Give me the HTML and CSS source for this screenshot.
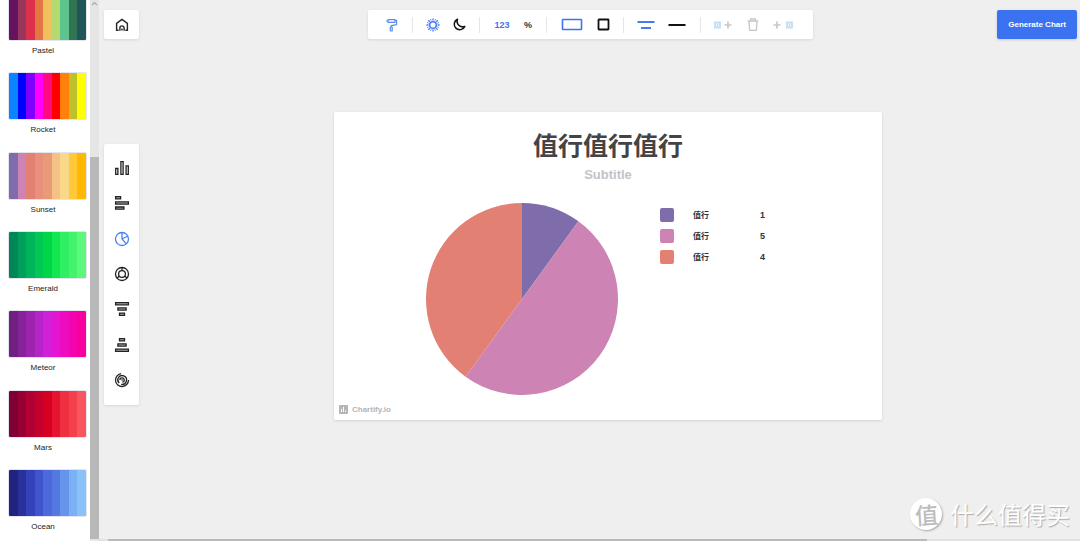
FILE: index.html
```html
<!DOCTYPE html>
<html lang="zh-CN">
<head>
<meta charset="utf-8">
<meta name="viewport" content="width=device-width, initial-scale=1">
<title>Chartify.io</title>
<link rel="stylesheet" href="styles.css">
</head>
<body>
<div class="app">
  <aside class="sidebar">
    <div class="palettes">
      <button class="palette"><span class="swatch pastel"></span><span class="palette-name">Pastel</span></button>
      <button class="palette"><span class="swatch rocket"></span><span class="palette-name">Rocket</span></button>
      <button class="palette"><span class="swatch sunset"></span><span class="palette-name">Sunset</span></button>
      <button class="palette"><span class="swatch emerald"></span><span class="palette-name">Emerald</span></button>
      <button class="palette"><span class="swatch meteor"></span><span class="palette-name">Meteor</span></button>
      <button class="palette"><span class="swatch mars"></span><span class="palette-name">Mars</span></button>
      <button class="palette"><span class="swatch ocean"></span><span class="palette-name">Ocean</span></button>
    </div>
    <div class="vbar">
      <svg width="9" height="8" viewBox="0 0 9 8"><path d="M2 5l2.500-2.500L7 5" fill="none" stroke="#aaa" stroke-width="1.200"/></svg>
      <div class="vbar-thumb"></div>
    </div>
  </aside>

  <main class="main">
    <header class="header">
      <button class="panel home" aria-label="Home">
        <svg width="14" height="14" viewBox="0 0 14 14" fill="none" stroke="#222" stroke-width="1.400"><path d="M3.600 12.300H1.600V5.400L7 1.400l5.400 4v6.900h-2"/><path d="M4.900 12.800V10a2.100 2.100 0 0 1 4.200 0v2.800M7 10.500v2"/></svg>
      </button>
      <div class="panel toolbar" role="toolbar" aria-label="Chart options">
        <div class="group">
          <button class="tool w28" aria-label="Paint"><svg width="14" height="14" viewBox="0 0 14 14" fill="none" stroke="#5b8af2" stroke-width="1.200" stroke-linejoin="round"><path d="M4 1.600h7v2.800H4zM4 3H2M11 2.400h1.600v4.200L7.200 7.600V9"/><path d="M6.300 9h1.900v4H6.300z"/></svg></button>
        </div>
        <div class="group">
          <button class="tool w26" aria-label="Light"><svg width="14" height="14" viewBox="0 0 14 14" fill="none" stroke="#4379f2"><circle cx="7" cy="7" r="3.300" stroke-width="1.500"/><path stroke-width="1.300" d="M7 .4v2M7 11.600v2M.4 7h2M11.600 7h2M2.300 2.300l1.500 1.500M10.200 10.200l1.500 1.500M2.300 11.700l1.500-1.500M10.200 3.800l1.500-1.500"/><path stroke-width=".8" d="M4.500 1l.7 1.700M8.800 11.300l.7 1.700M1 9.500l1.700-.7M11.300 5.200l1.700-.7M1 4.500l1.700.7M11.300 8.800l1.700.7M9.500 1l-.7 1.700M5.200 11.300L4.500 13"/></svg></button>
          <button class="tool w26" aria-label="Dark"><svg width="14" height="13" viewBox="0 0 14 13" fill="none" stroke="#111" stroke-width="1.500" stroke-linejoin="round"><path d="M5.500 1.200a5.500 5.500 0 1 0 7.300 7.200A5.600 5.600 0 0 1 5.500 1.200z"/></svg></button>
        </div>
        <div class="group">
          <button class="tool w30 active">123</button>
          <button class="tool w22">%</button>
        </div>
        <div class="group">
          <button class="tool w36" aria-label="Wide"><svg width="22" height="13" viewBox="0 0 22 13"><rect x="1.500" y="1.500" width="19" height="10" rx=".5" fill="none" stroke="#3f74f1" stroke-width="1.600"/></svg></button>
          <button class="tool w26" aria-label="Square"><svg width="13" height="13" viewBox="0 0 13 13"><rect x="1.500" y="1.500" width="10" height="10" rx=".5" fill="none" stroke="#111" stroke-width="1.800"/></svg></button>
        </div>
        <div class="group">
          <button class="tool w30" aria-label="Title and subtitle"><svg width="18" height="10" viewBox="0 0 18 10" stroke="#4379f2" stroke-width="2"><path d="M.5 2h17M4 8h10"/></svg></button>
          <button class="tool w32" aria-label="Title only"><svg width="18" height="4" viewBox="0 0 18 4" stroke="#111" stroke-width="2"><path d="M.5 2h17"/></svg></button>
        </div>
        <div class="group">
          <button class="tool w30" aria-label="Add before"><svg width="18" height="8" viewBox="0 0 18 8" fill="none"><path d="M1 1.500h5v5H1z" fill="#eef6fd" stroke="#c5ddf3" stroke-width="1.800"/><path d="M3 3.500h1v1H3z" fill="#8fb9e6"/><path d="M10.500 4h7M14 .5v7" stroke="#c8c8c8" stroke-width="1.700"/></svg></button>
          <button class="tool w30" aria-label="Delete"><svg width="12" height="13" viewBox="0 0 12 13" fill="none" stroke="#c6c6c6" stroke-width="1.300"><path d="M.8 3h10.400M3.700 3V1h4.600v2M1.900 3l.8 9.300h6.600l.8-9.300"/></svg></button>
          <button class="tool w30" aria-label="Add after"><svg width="20" height="8" viewBox="0 0 20 8" fill="none"><path d="M.5 4h7M4 .5v7" stroke="#c8c8c8" stroke-width="1.700"/><path d="M14 1.500h5v5h-5z" fill="#eef6fd" stroke="#c5ddf3" stroke-width="1.800"/><path d="M16 3.500h1v1h-1z" fill="#8fb9e6"/></svg></button>
        </div>
      </div>
      <button class="generate">Generate Chart</button>
    </header>

    <div class="workspace">
      <nav class="panel rail" aria-label="Chart types">
        <button class="type" aria-label="Column"><svg width="16" height="16" viewBox="0 0 16 16"><path d="M1.700 8.500h2.200v5.800H1.700zM6.900 1.700h2.200v12.600H6.900zM12.100 5.800h2.200v8.500h-2.200z"/></svg></button>
        <button class="type" aria-label="Bar"><svg width="16" height="16" viewBox="0 0 16 16"><path fill="#aaa" d="M1.600 1.600h5v2.200h-5zM1.600 6.900h12.800v2.200H1.600zM1.600 12h8.300v2.200H1.600z"/></svg></button>
        <button class="type active" aria-label="Pie"><svg width="16" height="16" viewBox="0 0 16 16"><circle cx="8" cy="8" r="6.500"/><path d="M8 1.500V8l4.300 4.900M8 8l6-3"/></svg></button>
        <button class="type" aria-label="Doughnut"><svg width="16" height="16" viewBox="0 0 16 16"><circle cx="8" cy="8" r="6.500"/><circle cx="8" cy="8" r="3.400"/><path d="M8 1.500v3.100M5.400 10.300l-2.600 1.800M10.600 10.300l2.600 1.800"/></svg></button>
        <button class="type" aria-label="Funnel"><svg width="16" height="16" viewBox="0 0 16 16"><path fill="#aaa" d="M1.600 1.600h12.800v2.200H1.600zM3.900 6.900h8.200v2.200H3.900zM5.500 12.100h5v2.200h-5z"/></svg></button>
        <button class="type" aria-label="Pyramid"><svg width="16" height="16" viewBox="0 0 16 16"><path fill="#aaa" d="M5.500 1.600h5v2.200h-5zM3.900 6.900h8.200v2.200H3.900zM1.600 12.100h12.800v2.200H1.600z"/></svg></button>
        <button class="type" aria-label="Radial"><svg width="16" height="16" viewBox="0 0 16 16"><path d="M14.500 8A6.500 6.500 0 1 1 7 1.600M4.200 6a4.400 4.400 0 1 1 3 6.300M5.800 8a2.200 2.200 0 1 1 2.500 2.200M4.200 6c-.8 1.600-.3 3.800 1 5M7.500 8h1.200"/></svg></button>
      </nav>

      <div class="stage">
        <article class="card">
          <h1 class="title">值行值行值行</h1>
          <p class="subtitle">Subtitle</p>
          <div class="chart">
            <svg class="pie" viewBox="-96 -96 192 192" role="img" aria-label="Pie chart: 1, 5, 4">
              <path fill="#7e6cab" d="M0 0V-96A96 96 0 0 1 56.430 -77.670z"/>
              <path fill="#cd84b5" d="M0 0L56.430 -77.670A96 96 0 0 1 -56.430 77.670z"/>
              <path fill="#e28173" d="M0 0L-56.430 77.670A96 96 0 0 1 0 -96z"/>
            </svg>
            <table class="legend">
              <tbody>
                <tr><td class="key"><span class="dot violet"></span></td><td class="name">值行</td><td class="value">1</td></tr>
                <tr><td class="key"><span class="dot pink"></span></td><td class="name">值行</td><td class="value">5</td></tr>
                <tr><td class="key"><span class="dot coral"></span></td><td class="name">值行</td><td class="value">4</td></tr>
              </tbody>
            </table>
          </div>
          <footer class="brand">
            <svg width="9" height="9" viewBox="0 0 9 9"><rect width="9" height="9" rx="1" fill="#b5b5b5"/><path d="M2.500 4v3M4.500 2v5M6.500 5.500V7" stroke="#fff"/></svg>
            <span>Chartify.io</span>
          </footer>
        </article>
      </div>
    </div>
    <div class="hbar"><div class="hbar-thumb"></div></div>
  </main>

  <div class="watermark"><span class="seal"><span class="seal-char">值</span></span><span>什么值得买</span></div>
</div>
</body>
</html>
```
FILE: styles.css
```css
* { box-sizing: border-box; }

body {
  margin: 0;
  background: #efefef;
  color: #333;
  font-family: "Liberation Sans", Arial, "Noto Sans CJK SC", sans-serif;
}

button {
  margin: 0;
  padding: 0;
  border: 0;
  background: none;
  font-family: inherit;
  cursor: pointer;
}

svg { display: block; }

.app {
  position: relative;
  display: flex;
  height: 100vh;
  overflow: hidden;
}

/* Palette list */
.sidebar {
  display: flex;
  flex: none;
  background: #fff;
}

.palettes {
  display: flex;
  flex-direction: column;
  justify-content: space-between;
  width: 90px;
  height: calc(100vh + 3px);
  margin-top: -7px;
  padding-left: 8px;
}

.palette {
  display: flex;
  flex-direction: column;
  width: 79px;
}

.swatch {
  width: 100%;
  height: 48px;
  border: 1px solid #e4e4ee;
  border-radius: 2px;
  background: linear-gradient(90deg,
    var(--a) 0 11.11%, var(--b) 0 22.22%, var(--c) 0 33.33%,
    var(--d) 0 44.44%, var(--e) 0 55.55%, var(--f) 0 66.66%,
    var(--g) 0 77.77%, var(--h) 0 88.88%, var(--i) 0);
}

.pastel { --a: #66135f; --b: #96375b; --c: #dc304c; --d: #e27642; --e: #f2bf5e; --f: #b4d96e; --g: #5cc48c; --h: #317553; --i: #22555a; }
.rocket { --a: #0a84ff; --b: #0000ff; --c: #8000ff; --d: #ff00ff; --e: #ff0a80; --f: #ff0000; --g: #ff800a; --h: #c0c02a; --i: #ffff00; }
.sunset { --a: #7e6cab; --b: #cd84b5; --c: #e28173; --d: #e8907c; --e: #e99a76; --f: #f5c285; --g: #f9d989; --h: #ffc93a; --i: #ffb900; }
.emerald { --a: #008757; --b: #009f5c; --c: #00b45c; --d: #00c853; --e: #00d748; --f: #12e650; --g: #30ef62; --h: #43f36c; --i: #5cf77c; }
.meteor { --a: #702080; --b: #86229a; --c: #9e24b0; --d: #b424c8; --e: #d020d8; --f: #e416d4; --g: #ee0cc0; --h: #f404ae; --i: #f8009c; }
.mars { --a: #800034; --b: #980034; --c: #b20032; --d: #c6002c; --e: #d80020; --f: #e61430; --g: #ee3040; --h: #f4404c; --i: #f8565e; }
.ocean { --a: #20247e; --b: #28309a; --c: #3442ba; --d: #4054cc; --e: #4c6adc; --f: #5478e2; --g: #6694ea; --h: #7ab0f4; --i: #8ac2f8; }

.palette-name {
  padding-right: 9px;
  color: #222;
  font-size: 8px;
  line-height: 20px;
  text-align: center;
}

.vbar {
  display: flex;
  flex-direction: column;
  width: 9px;
  height: 100vh;
  padding-bottom: 2px;
  background: #e5e5e5;
}

.vbar-thumb {
  flex: 1;
  margin-top: 149px;
  background: #b8b8b8;
}

/* Main area */
.main {
  display: flex;
  flex: 1;
  flex-direction: column;
  min-width: 0;
}

.panel {
  background: #fff;
  border-radius: 2px;
  box-shadow: 0 1px 3px rgba(0, 0, 0, 0.1);
}

.header {
  display: grid;
  grid-template-columns: 1fr auto 1fr;
  padding: 10px 3px 0 5px;
}

.home {
  display: grid;
  place-items: center;
  width: 35px;
  height: 29px;
}

.toolbar {
  display: flex;
  align-items: center;
  padding: 0 8px 0 2px;
}

.group {
  display: flex;
  padding: 0 7px;
}

.group + .group { border-left: 1px solid #e6e6e6; }

.tool {
  display: grid;
  place-items: center;
  height: 16px;
  color: #333;
  font-size: 9px;
  font-weight: bold;
}

.tool.active { color: #3f74f1; }

.w22 { width: 22px; }
.w26 { width: 26px; }
.w28 { width: 28px; }
.w30 { width: 30px; }
.w32 { width: 32px; }
.w36 { width: 36px; }

.generate {
  justify-self: end;
  height: 29px;
  padding: 0 11px;
  border-radius: 2px;
  background: #3b72f2;
  box-shadow: 0 1px 3px rgba(0, 0, 0, 0.15);
  color: #fff;
  font-size: 8px;
  font-weight: bold;
}

.workspace {
  display: flex;
  flex: 1;
  align-items: center;
  padding: 0 3px 30px 5px;
}

.rail {
  display: flex;
  flex-direction: column;
  width: 35px;
  min-height: 261px;
  padding: 7px 0;
}

.type {
  display: grid;
  flex: 1;
  place-items: center;
  fill: none;
  stroke: #222;
  stroke-width: 1.3;
}

.type.active { stroke: #4b80f5; }

.stage {
  display: flex;
  flex: 1;
  justify-content: center;
  margin-bottom: 17px;
}

/* Chart card */
.card {
  width: 100%;
  max-width: 548px;
  padding: 19px 5px 5px;
  background: #fff;
  border-radius: 2px;
  box-shadow: 0 1px 3px rgba(0, 0, 0, 0.12);
}

.title {
  margin: 0;
  color: #444;
  font-size: 25px;
  line-height: 30px;
  text-align: center;
}

.subtitle {
  margin: 5px 0 19px;
  color: #bec4c8;
  font-size: 13px;
  font-weight: bold;
  line-height: 18px;
  text-align: center;
}

.chart {
  display: flex;
  align-items: flex-start;
  gap: 42px;
  padding-left: 87px;
}

.pie {
  flex: none;
  width: 192px;
}

.legend {
  margin-top: 2px;
  border-collapse: collapse;
  color: #333;
  font-size: 8px;
  font-weight: bold;
  line-height: 21px;
}

.legend td {
  height: 21px;
  padding: 0;
  vertical-align: middle;
}

.legend .key { width: 33px; }
.legend .name { width: 67px; }
.legend .value { font-size: 9px; }

.dot {
  display: block;
  width: 14px;
  height: 14px;
  border-radius: 2px;
}

.violet { background: #7e6cab; }
.pink { background: #cd84b5; }
.coral { background: #e28173; }

.brand {
  display: flex;
  align-items: center;
  gap: 4px;
  margin-top: 10px;
  color: #b5b5b5;
  font-size: 8px;
  font-weight: bold;
  line-height: 10px;
}

.hbar {
  height: 2px;
  padding: 0 153px 0 9px;
  background: #e2e2e2;
}

.hbar-thumb {
  height: 100%;
  background: #bababa;
}

/* Watermark over the canvas */
.watermark {
  position: absolute;
  right: 10px;
  bottom: 11px;
  display: flex;
  align-items: center;
  gap: 8px;
  color: #fff;
  font-family: "Noto Sans CJK SC", sans-serif;
  font-size: 24px;
  line-height: 32px;
  text-shadow: 1px 1px 1px #aaa;
}

.seal {
  display: grid;
  place-items: center;
  width: 32px;
  height: 32px;
  border-radius: 50%;
  background: #fff;
  box-shadow: 1px 1px 2px #aaa;
}

.seal-char {
  color: #bdbdbd;
  font-size: 23px;
  font-weight: 500;
  line-height: 30px;
  text-shadow: none;
  transform: rotate(-4deg);
}
```
